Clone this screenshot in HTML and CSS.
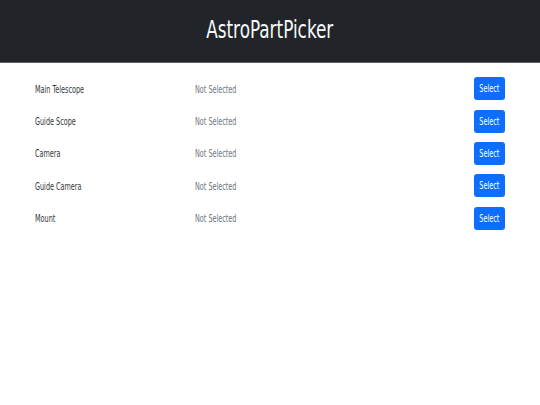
FILE: index.html
```html
<!DOCTYPE html>
<html>
<head>
<meta charset="utf-8">
<link rel="stylesheet" href="styles.css">
</head>
<body>
<header class="topbar">
  <h1 class="title"><span class="squeeze-c">AstroPartPicker</span></h1>
</header>
<main class="parts">
  <div class="part-row">
    <span class="part-name"><span class="squeeze">Main Telescope</span></span>
    <span class="part-status"><span class="squeeze">Not Selected</span></span>
    <button class="select-btn"><span class="squeeze-c">Select</span></button>
  </div>
  <div class="part-row">
    <span class="part-name"><span class="squeeze">Guide Scope</span></span>
    <span class="part-status"><span class="squeeze">Not Selected</span></span>
    <button class="select-btn"><span class="squeeze-c">Select</span></button>
  </div>
  <div class="part-row">
    <span class="part-name"><span class="squeeze">Camera</span></span>
    <span class="part-status"><span class="squeeze">Not Selected</span></span>
    <button class="select-btn"><span class="squeeze-c">Select</span></button>
  </div>
  <div class="part-row">
    <span class="part-name"><span class="squeeze">Guide Camera</span></span>
    <span class="part-status"><span class="squeeze">Not Selected</span></span>
    <button class="select-btn"><span class="squeeze-c">Select</span></button>
  </div>
  <div class="part-row">
    <span class="part-name"><span class="squeeze">Mount</span></span>
    <span class="part-status"><span class="squeeze">Not Selected</span></span>
    <button class="select-btn"><span class="squeeze-c">Select</span></button>
  </div>
</main>
</body>
</html>
```
FILE: styles.css
```css
html, body {
  margin: 0;
  padding: 0;
  background: #ffffff;
  font-family: "DejaVu Sans Condensed", "DejaVu Sans", sans-serif;
}

.squeeze {
  display: inline-block;
  white-space: nowrap;
  transform: scaleX(0.75);
  transform-origin: 0 50%;
}

.squeeze-c {
  display: inline-block;
  white-space: nowrap;
  transform: scaleX(0.75);
  transform-origin: 50% 50%;
}

.topbar {
  height: 63px;
  box-sizing: border-box;
  padding-bottom: 3px;
  background: #212529;
  border-bottom: 1px solid #5e6165;
  display: flex;
  align-items: center;
  justify-content: center;
}

.title {
  margin: 0;
  color: #f8f9fa;
  font-weight: normal;
  font-size: 25px;
  line-height: 1.2;
}

.parts {
  padding: 10px 35px 0 35px;
  display: flex;
  flex-direction: column;
}

.part-row {
  height: 32.4px;
  display: flex;
  align-items: center;
  font-size: 9.6px;
}

.part-name {
  width: 160px;
  color: #33373b;
}

.part-status {
  flex: 1;
  color: #6c757d;
}

.select-btn {
  width: 31px;
  height: 23px;
  margin-top: -1px;
  padding: 0;
  border: none;
  border-radius: 3px;
  background: #0d6efd;
  color: #ffffff;
  font-family: "DejaVu Sans Condensed", "DejaVu Sans", sans-serif;
  font-size: 9.6px;
  display: flex;
  align-items: center;
  justify-content: center;
}
```
